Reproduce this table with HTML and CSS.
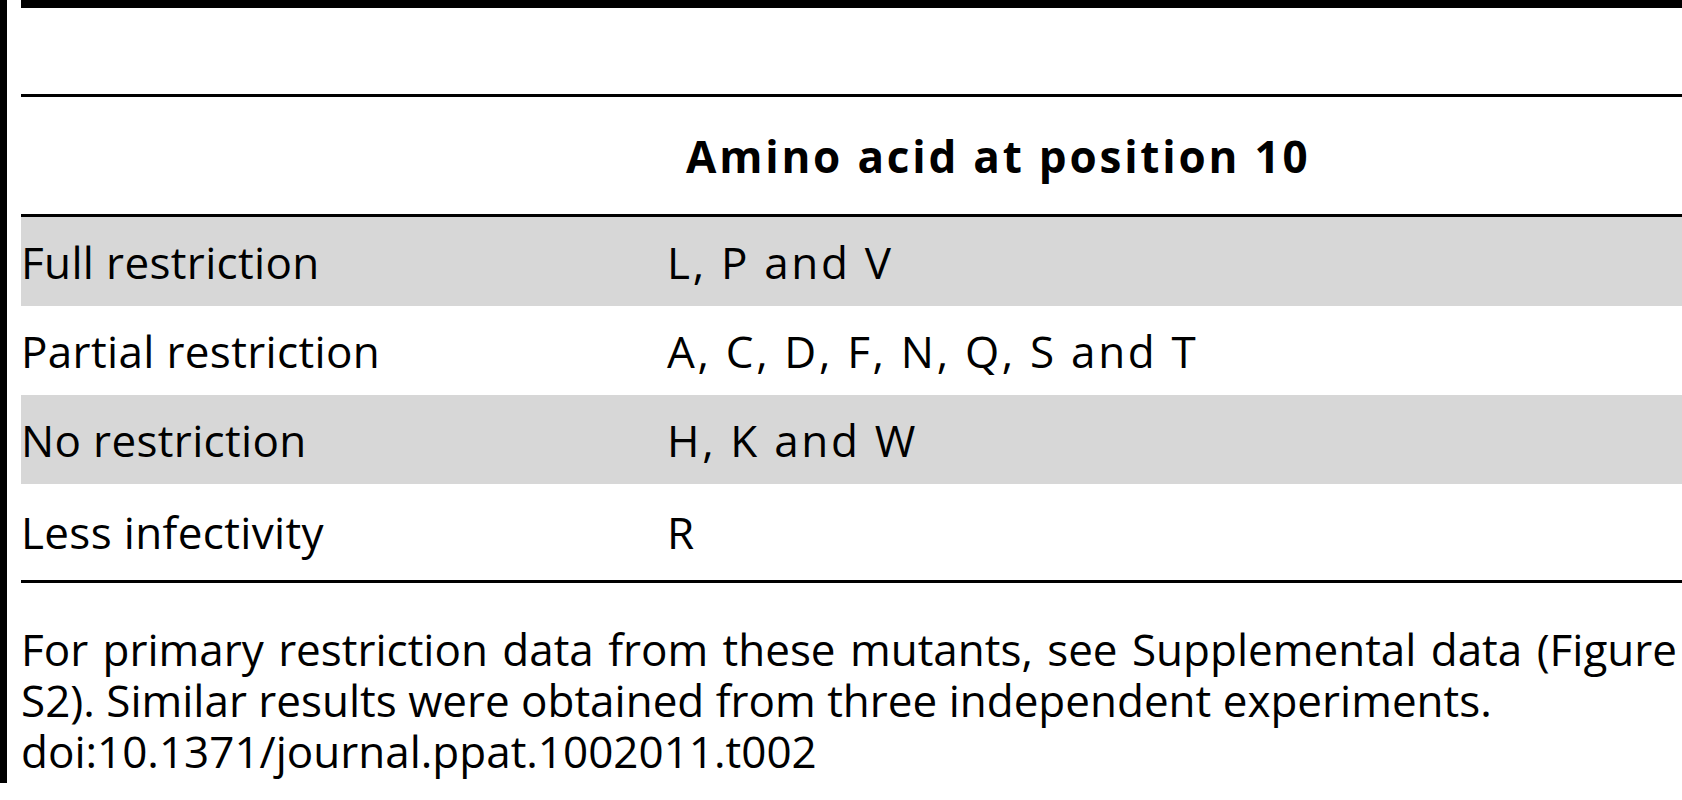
FILE: index.html
```html
<!DOCTYPE html>
<html lang="en">
<head>
<meta charset="utf-8">
<title>Table 2</title>
<link rel="stylesheet" href="styles.css">
</head>
<body>
<div class="page">
  <table class="data">
    <thead>
      <tr class="title-row"><th colspan="2"></th></tr>
      <tr class="head-row">
        <th class="c1"></th>
        <th class="c2 head">Amino acid at position 10</th>
      </tr>
    </thead>
    <tbody>
      <tr class="shade"><td class="c1">Full restriction</td><td class="c2">L, P and V</td></tr>
      <tr><td class="c1">Partial restriction</td><td class="c2">A, C, D, F, N, Q, S and T</td></tr>
      <tr class="shade"><td class="c1">No restriction</td><td class="c2">H, K and W</td></tr>
      <tr class="last"><td class="c1">Less infectivity</td><td class="c2">R</td></tr>
    </tbody>
  </table>
  <p class="caption">For primary restriction data from these mutants, see Supplemental data (Figure S2). Similar results were obtained from three independent experiments.<br>doi:10.1371/journal.ppat.1002011.t002</p>
</div>
</body>
</html>
```

FILE: styles.css
```css
html, body {
  margin: 0;
  padding: 0;
  background: #ffffff;
}

body {
  font-family: "Open Sans", "DejaVu Sans", sans-serif;
  color: #000000;
  overflow: hidden;
}

.page {
  border-left: 7px solid #000000;
  height: 783px;
  padding-left: 14px;
  box-sizing: border-box;
}

.data {
  width: 100%;
  border-collapse: collapse;
  font-size: 44px;
}

.data th,
.data td {
  padding: 0;
  text-align: left;
  vertical-align: middle;
}

.title-row th {
  height: 86px;
  border-top: 8px solid #000000;
  border-bottom: 3px solid #000000;
}

.head-row th {
  height: 117px;
  border-bottom: 3px solid #000000;
  font-weight: 700;
}

.c1 {
  width: 646px;
  letter-spacing: 0.35px;
}

.c2 {
  letter-spacing: 2.7px;
}

.head {
  padding-left: 19px !important;
  letter-spacing: 2.8px;
}

tbody tr td {
  height: 89px;
  line-height: 1;
}

tbody tr.last td {
  height: 96px;
  border-bottom: 3px solid #000000;
}

tr.shade td {
  background: #d7d7d7;
}

.caption {
  margin: 0;
  font-size: 44px;
  line-height: 51px;
  padding-top: 41px;
  width: 1656px;
  text-align: justify;
}
```
